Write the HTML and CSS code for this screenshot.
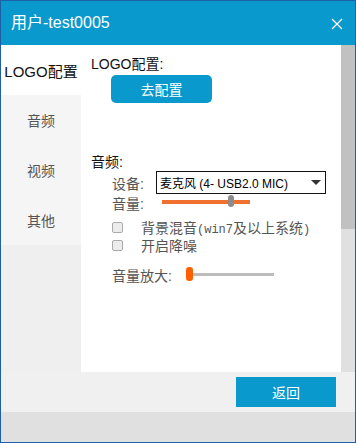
FILE: index.html
```html
<!DOCTYPE html>
<html>
<head>
<meta charset="utf-8">
<link rel="stylesheet" href="styles.css">
</head>
<body>
<div class="window">
  <div class="titlebar">
    <span class="title">用户-test0005</span>
    <svg class="close" width="12" height="12" viewBox="0 0 12 12"><path d="M1 1 L11 11 M11 1 L1 11" stroke="#fff" stroke-width="1.3" fill="none"/></svg>
  </div>
  <div class="main">
    <div class="sidebar">
      <div class="tab active">LOGO配置</div>
      <div class="tab">音频</div>
      <div class="tab">视频</div>
      <div class="tab">其他</div>
    </div>
    <div class="content">
      <div class="sec-title">LOGO配置:</div>
      <div class="btn-config">去配置</div>
      <div class="sec-title audio-title">音频:</div>
      <div class="audio-body">
        <div class="row device">
          <span class="label">设备:</span>
          <div class="select"><span>麦克风 (4- USB2.0 MIC)</span><span class="arrow"></span></div>
        </div>
        <div class="row volume">
          <span class="label vol-label">音量:</span>
          <div class="slider-orange"><span class="thumb-gray"></span></div>
        </div>
        <div class="row check first">
          <span class="checkbox"></span>
          <span class="check-text">背景混音<span class="mono">(win7</span>及以上系统<span class="mono">)</span></span>
        </div>
        <div class="row check">
          <span class="checkbox"></span>
          <span class="check-text">开启降噪</span>
        </div>
        <div class="row amp">
          <span class="label amp-label">音量放大:</span>
          <div class="slider-gray"><span class="thumb-orange"></span></div>
        </div>
      </div>
    </div>
    <div class="scrollbar"><div class="scroll-thumb"></div></div>
  </div>
  <div class="footer">
    <div class="btn-back">返回</div>
  </div>
  <div class="status"></div>
</div>
</body>
</html>
```
FILE: styles.css
```css
* { box-sizing: border-box; }
html, body { margin: 0; padding: 0; }
body {
  width: 356px;
  height: 443px;
  font-family: "Liberation Sans", "Noto Sans CJK SC", sans-serif;
  overflow: hidden;
}
.window {
  width: 356px;
  height: 443px;
  border: 1px solid #1f5fa8;
  display: flex;
  flex-direction: column;
}
.titlebar {
  height: 44px;
  flex: none;
  background: #0a99cc;
  display: flex;
  align-items: center;
  justify-content: space-between;
  padding: 0 12px 0 10px;
}
.title {
  color: #fff;
  font-size: 16px;
  line-height: 20px;
}
.close { display: block; margin-top: 1px; }
.main {
  height: 327px;
  flex: none;
  display: flex;
}
.sidebar {
  width: 80px;
  flex: none;
  background: #efefef;
}
.tab {
  height: 50px;
  background: #f5f5f5;
  display: flex;
  align-items: center;
  justify-content: center;
  font-size: 14px;
  color: #555;
}
.tab.active {
  background: #fff;
  color: #111;
  font-size: 15px;
}
.content {
  flex: 1;
  background: #fff;
  padding: 9px 0 0 10px;
}
.sec-title {
  font-size: 14px;
  line-height: 20px;
  height: 20px;
  color: #111;
}
.btn-config {
  margin: 1px 0 0 20px;
  width: 101px;
  height: 28px;
  border-radius: 5px;
  background: #0a99cc;
  color: #fff;
  font-size: 14px;
  display: flex;
  align-items: center;
  justify-content: center;
}
.audio-title {
  margin-top: 50px;
  line-height: 18px;
  height: 18px;
}
.audio-body {
  padding-left: 21px;
}
.row {
  display: flex;
  align-items: center;
  font-size: 14px;
  color: #555;
}
.label { flex: none; }
.device { height: 23px; }
.device .label { width: 44px; }
.select {
  width: 170px;
  height: 23px;
  border: 1px solid #111;
  display: flex;
  align-items: center;
  justify-content: space-between;
  padding: 0 4px 0 3px;
  font-size: 12px;
  color: #000;
}
.arrow {
  width: 0;
  height: 0;
  border-left: 5px solid transparent;
  border-right: 5px solid transparent;
  border-top: 5px solid #333;
}
.volume { height: 18px; }
.vol-label { width: 50px; }
.slider-orange {
  position: relative;
  width: 88px;
  height: 4px;
  margin-top: -3px;
  background: #f07030;
}
.thumb-gray {
  position: absolute;
  left: 66px;
  top: -5px;
  width: 6px;
  height: 12px;
  border-radius: 3px;
  background: #8c8c8c;
}
.check { height: 18px; }
.check.first { margin-top: 6px; }
.checkbox {
  width: 11px;
  height: 11px;
  border: 1px solid #aaa;
  border-radius: 2px;
  background: #ececec;
  margin-right: 18px;
  flex: none;
}
.mono {
  font-family: "Liberation Mono", monospace;
  font-size: 12px;
}
.amp {
  height: 18px;
  margin-top: 12px;
}
.amp-label { width: 74px; }
.slider-gray {
  position: relative;
  width: 88px;
  height: 3px;
  margin-top: -1px;
  background: #bcbcbc;
}
.thumb-orange {
  position: absolute;
  left: 0;
  top: -6px;
  width: 7px;
  height: 14px;
  border-radius: 3px;
  background: #ff6100;
}
.scrollbar {
  width: 14px;
  flex: none;
  background: #e0e0e0;
}
.scroll-thumb {
  height: 184px;
  background: #c1c1c1;
}
.footer {
  height: 40px;
  flex: none;
  background: #f0f0f0;
  display: flex;
  justify-content: flex-end;
  align-items: center;
  padding-right: 19px;
}
.btn-back {
  width: 100px;
  height: 30px;
  background: #0a99cc;
  color: #fff;
  font-size: 14px;
  display: flex;
  align-items: center;
  justify-content: center;
}
.status {
  flex: 1;
  background: #e0e0e0;
}
```
